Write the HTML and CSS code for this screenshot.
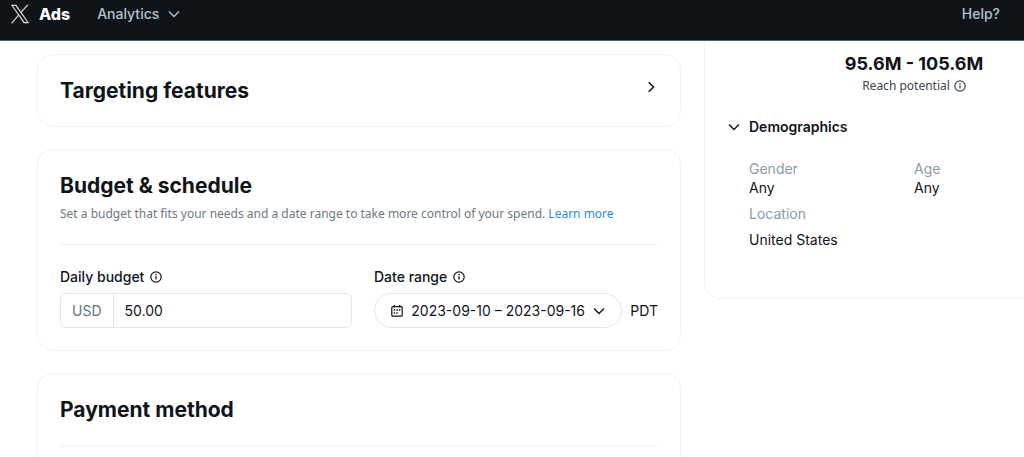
FILE: index.html
```html
<!DOCTYPE html>
<html lang="en">
<head>
<meta charset="utf-8">
<meta name="viewport" content="width=device-width, initial-scale=1">
<title>X Ads</title>
<link rel="stylesheet" href="styles.css">
</head>
<body>
<svg class="sprite" aria-hidden="true">
  <symbol id="info" viewBox="0 0 12 12"><circle cx="6" cy="6" r="5.2" fill="none" stroke="currentColor" stroke-width="1.2"/><path d="M6 5.3v3.2" fill="none" stroke="currentColor" stroke-width="1.3"/><circle cx="6" cy="3.7" r=".8" fill="currentColor"/></symbol>
  <symbol id="down" viewBox="0 0 12 12"><path d="M1 3.5l5 5 5-5" fill="none" stroke="currentColor" stroke-width="1.4"/></symbol>
  <symbol id="right" viewBox="0 0 12 12"><path d="M2.7 1.2L7.5 6l-4.8 4.8" fill="none" stroke="currentColor" stroke-width="1.5"/></symbol>
</svg>
<header class="topbar">
  <a class="brand" href="#">
    <svg class="logo" viewBox="0 0 24 24" aria-hidden="true"><path fill="currentColor" d="M14.1 10.3 22.3 1h-1.9l-7.2 8.1L7.5 1H1l8.6 12.2L1 23h1.9l7.5-8.5 6 8.5H23zm-2.7 3-.9-1.2L3.6 2.4h3l5.6 7.8.9 1.2 7.3 10.2h-3z"/></svg>
    <span class="brand-name">Ads</span>
  </a>
  <button class="nav-menu" type="button">Analytics <svg class="chevron"><use href="#down"/></svg></button>
  <a class="help" href="#">Help?</a>
</header>
<main class="page">
  <div class="forms">
    <section class="card">
      <button class="expander" type="button"><span class="title">Targeting features</span><svg class="chevron"><use href="#right"/></svg></button>
    </section>
    <section class="card">
      <h2 class="title">Budget &amp; schedule</h2>
      <p class="hint">Set a budget that fits your needs and a date range to take more control of your spend. <a class="link" href="#">Learn more</a></p>
      <div class="fields">
        <div class="field">
          <div class="label-row"><label for="budget">Daily budget</label><svg class="info"><use href="#info"/></svg></div>
          <div class="amount"><span class="currency">USD</span><input class="amount-input" id="budget" type="text" value="50.00"></div>
        </div>
        <div class="field">
          <div class="label-row"><label for="dates">Date range</label><svg class="info"><use href="#info"/></svg></div>
          <div class="date-row">
            <button class="dates" id="dates" type="button">
              <svg class="info" viewBox="0 0 12 12" aria-hidden="true"><rect x=".8" y="1.6" width="10.4" height="9.6" rx="1" fill="none" stroke="currentColor" stroke-width="1.2"/><path d="M3.3 0v2.4M8.7 0v2.4" stroke="currentColor" stroke-width="1.3"/><path d="M5.3 5h1.4M7.9 5h1.4M2.7 8h1.4M5.3 8h1.4M2.7 5h1.4" stroke="currentColor" stroke-width="1.3"/></svg>
              <span class="dates-text">2023-09-10 – 2023-09-16</span>
              <svg class="chevron"><use href="#down"/></svg>
            </button>
            <span>PDT</span>
          </div>
        </div>
      </div>
    </section>
    <section class="card">
      <h2 class="title">Payment method</h2>
      <hr class="rule">
    </section>
  </div>
  <aside class="summary">
    <div class="reach">95.6M - 105.6M</div>
    <div class="reach-label">Reach potential <svg class="info"><use href="#info"/></svg></div>
    <button class="section-toggle" type="button"><svg class="chevron"><use href="#down"/></svg>Demographics</button>
    <dl class="facts">
      <div><dt>Gender</dt><dd>Any</dd></div>
      <div><dt>Age</dt><dd>Any</dd></div>
      <div class="location"><dt>Location</dt><dd>United States</dd></div>
    </dl>
  </aside>
</main>
</body>
</html>
```
FILE: styles.css
```css
* { box-sizing: border-box; }
body {
  margin: 0;
  height: 100vh;
  overflow: hidden;
  background: #fff;
  color: #0f1419;
  font: 14px/20px Inter, "Liberation Sans", sans-serif;
}
button { margin: 0; padding: 0; border: 0; background: none; color: inherit; font: inherit; cursor: pointer; }
a { text-decoration: none; }
.sprite { display: none; }
.chevron, .info { width: 12px; height: 12px; flex: none; }

.topbar {
  display: flex;
  align-items: center;
  height: 41px;
  padding: 0 24px 12px 10px;
  background: #0f1419;
  border-bottom: 1px solid #536471;
  color: #b0c2ce;
  font-weight: 500;
}
.brand { display: flex; align-items: center; gap: 9px; color: #fff; }
.logo { width: 20px; height: 20px; color: #d5dadd; }
.brand-name { font-size: 16px; font-weight: 800; }
.nav-menu { display: flex; align-items: center; gap: 9px; margin-left: 27px; }
.help { margin-left: auto; color: inherit; }

.page {
  display: grid;
  grid-template-columns: 644fr 420fr;
  gap: 23px;
  align-items: start;
  margin-right: -100px;
  padding-left: 37px;
}
.forms { display: grid; gap: 22px; padding-top: 13px; }
.card { padding: 22px; border: 1px solid #eff3f4; border-radius: 16px; }
.title { margin: 0; font-size: 21px; line-height: 27px; font-weight: 700; }
.expander { display: flex; align-items: center; justify-content: space-between; width: 100%; text-align: left; }
.expander .chevron { margin-bottom: 8px; }
.hint { margin: 5px 0 0; padding-bottom: 20px; border-bottom: 1px solid #eff3f4; color: #6b7882; font-family: "Noto Sans", "Open Sans", sans-serif; font-size: 12px; }
.link { color: #1d8bf0; }
.fields { display: grid; grid-template-columns: 292px 1fr; gap: 22px; padding-top: 22px; }
.label-row { display: flex; align-items: center; gap: 6px; margin-bottom: 6px; font-weight: 500; }
.amount { display: flex; height: 35px; border: 1px solid #dfe7ea; border-radius: 6px; overflow: hidden; }
.currency { display: flex; align-items: center; padding: 0 11px; border-right: 1px solid #dfe7ea; color: #64727e; }
.amount-input { flex: 1; min-width: 0; padding: 0 11px; border: 0; background: none; color: inherit; font: inherit; }
.date-row { display: flex; align-items: center; gap: 8px; }
.dates { display: flex; flex: 1; align-items: center; justify-content: space-between; height: 35px; padding: 0 16px; border: 1px solid #dfe7ea; border-radius: 18px; white-space: nowrap; }
.rule { margin: 22px 0; border: 0; border-top: 2px solid #f5f7f7; }

.summary {
  padding: 11px 44px 49px;
  border: 1px solid #eff3f4;
  border-top: 0;
  border-radius: 0 0 16px 16px;
}
.reach { font-size: 18px; line-height: 24px; font-weight: 700; text-align: center; }
.reach-label { display: flex; align-items: center; justify-content: center; gap: 4px; color: #3b444c; font-family: "Noto Sans", "Open Sans", sans-serif; font-size: 12px; }
.section-toggle { display: flex; align-items: center; gap: 9px; margin: 21px 0 0 -21px; font-weight: 600; }
.facts { display: grid; grid-template-columns: 1fr 1fr; gap: 7px 0; margin: 22px 0 0; line-height: 19px; }
.facts dt { color: #8b9ba7; }
.facts dd { margin: 0; }
.location dd { margin-top: 7px; }
```
